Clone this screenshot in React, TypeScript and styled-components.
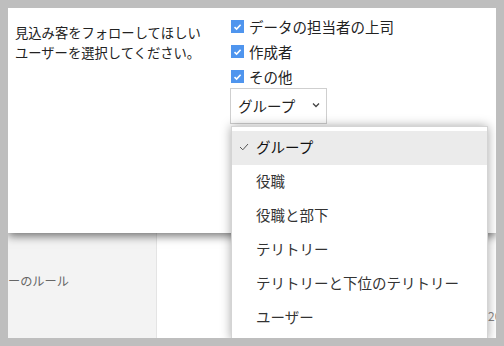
import styled, { createGlobalStyle } from "styled-components"

const GlobalStyle = createGlobalStyle`
  html, body {
    margin: 0;
    padding: 0;
    background: #bebebe;
  }
  body {
    font-family: "Noto Sans CJK JP", "Noto Sans", sans-serif;
    color: #222;
  }
`

const Page = styled.div`
  width: 504px;
  height: 346px;
  padding: 8px;
  box-sizing: border-box;
`

const Frame = styled.div`
  position: relative;
  width: 488px;
  height: 330px;
  background: #fff;
  overflow: hidden;
  display: flex;
  flex-direction: column;
`

const TopPanel = styled.div`
  position: relative;
  z-index: 2;
  height: 225px;
  flex-shrink: 0;
  background: #fff;
  display: flex;
  box-shadow: 0 3px 9px rgba(0, 0, 0, 0.55);
`

const Prompt = styled.div`
  width: 216px;
  padding: 15px 0 0 7px;
  font-size: 13.3px;
  line-height: 20px;
  color: #222;
`

const Options = styled.div`
  position: relative;
  padding-top: 6px;
  display: flex;
  flex-direction: column;
`

const CheckRow = styled.label`
  display: flex;
  align-items: center;
  height: 25px;
  font-size: 14.5px;
  color: #222;
  gap: 5px;
`

const Box = styled.span`
  width: 13px;
  height: 13px;
  background: #4f95ee;
  display: flex;
  align-items: center;
  justify-content: center;
`

const SelectWrap = styled.div`
  position: relative;
  margin-top: -1px;
  margin-left: -1px;
`

const Select = styled.div`
  box-sizing: border-box;
  width: 97px;
  height: 36px;
  border: 1px solid #cfcfcf;
  display: flex;
  align-items: center;
  justify-content: space-between;
  padding: 0 6px 2px 7px;
  font-size: 14.5px;
  color: #222;
`

const Menu = styled.ul`
  position: absolute;
  top: 38px;
  left: 1px;
  width: 255px;
  height: 208px;
  margin: 0;
  padding: 4px 0 0;
  list-style: none;
  background: #fff;
  border: 1px solid #d4d4d4;
  box-shadow: 0 0 10px rgba(0, 0, 0, 0.35);
  z-index: 5;
`

const MenuItem = styled.li<{ $active?: boolean }>`
  box-sizing: border-box;
  height: 34px;
  display: flex;
  align-items: center;
  padding: 0 0 4px 24px;
  position: relative;
  font-size: 14.5px;
  color: ${p => (p.$active ? "#111" : "#333")};
  background: ${p => (p.$active ? "#ebebeb" : "transparent")};
`

const Tick = styled.svg`
  position: absolute;
  left: 7px;
  top: 12px;
`

const Bottom = styled.div`
  flex: 1;
  display: flex;
`

const RuleColumn = styled.div`
  width: 148px;
  background: #f3f3f3;
  border-right: 1px solid #e4e4e4;
  font-size: 12.2px;
  color: #666;
  padding-top: 38px;
  line-height: 20px;
  white-space: nowrap;
`

const Rest = styled.div`
  flex: 1;
  display: flex;
  justify-content: flex-end;
`

const DateCell = styled.div`
  width: 8px;
  overflow: hidden;
  padding-top: 74px;
  font-size: 12px;
  color: #888;
  white-space: nowrap;
`

const CheckMark = () => (
  <svg width="9" height="8" viewBox="0 0 9 8">
    <path d="M1.5 4.2 L3.6 6.1 L7.6 1.8" fill="none" stroke="#fff" strokeWidth="1.6" />
  </svg>
)

const items = ["グループ", "役職", "役職と部下", "テリトリー", "テリトリーと下位のテリトリー", "ユーザー"]

export default function App() {
  return (
    <Page>
      <GlobalStyle />
      <Frame>
        <TopPanel>
          <Prompt>
            見込み客をフォローしてほしい
            <br />
            ユーザーを選択してください。
          </Prompt>
          <Options>
            <CheckRow><Box><CheckMark /></Box>データの担当者の上司</CheckRow>
            <CheckRow><Box><CheckMark /></Box>作成者</CheckRow>
            <CheckRow><Box><CheckMark /></Box>その他</CheckRow>
            <SelectWrap>
              <Select>
                グループ
                <svg width="8" height="6" viewBox="0 0 8 6">
                  <path d="M1 1.5 L4 4.5 L7 1.5" fill="none" stroke="#444" strokeWidth="1.3" />
                </svg>
              </Select>
              <Menu>
                {items.map((item, i) => (
                  <MenuItem key={item} $active={i === 0}>
                    {i === 0 && (
                      <Tick width="10" height="8" viewBox="0 0 10 8">
                        <path d="M1 4 L3.8 6.8 L9 1" fill="none" stroke="#555" strokeWidth="1" />
                      </Tick>
                    )}
                    {item}
                  </MenuItem>
                ))}
              </Menu>
            </SelectWrap>
          </Options>
        </TopPanel>
        <Bottom>
          <RuleColumn>ーのルール</RuleColumn>
          <Rest>
            <DateCell>2018/05/01</DateCell>
          </Rest>
        </Bottom>
      </Frame>
    </Page>
  )
}
